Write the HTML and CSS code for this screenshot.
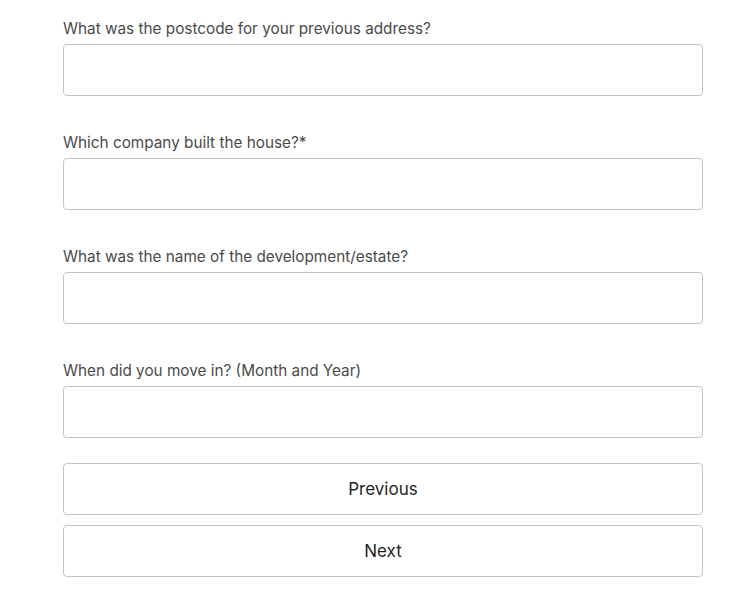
FILE: index.html
```html
<!DOCTYPE html>
<html lang="en">
<head>
<meta charset="utf-8">
<link rel="stylesheet" href="styles.css">
</head>
<body>
<form class="form">
  <div class="field">
    <label class="label">What was the postcode for your previous address?</label>
    <input class="input" type="text">
  </div>
  <div class="field">
    <label class="label">Which company built the house?*</label>
    <input class="input" type="text">
  </div>
  <div class="field">
    <label class="label">What was the name of the development/estate?</label>
    <input class="input" type="text">
  </div>
  <div class="field field-last">
    <label class="label">When did you move in? (Month and Year)</label>
    <input class="input" type="text">
  </div>
  <div class="buttons">
    <button class="btn" type="button">Previous</button>
    <button class="btn" type="button">Next</button>
  </div>
</form>
</body>
</html>
```
FILE: styles.css
```css
html, body {
  margin: 0;
  padding: 0;
  background: #ffffff;
}
body {
  font-family: Inter, "Liberation Sans", sans-serif;
}
.form {
  width: 640px;
  margin: 0 0 0 63px;
  padding-top: 19px;
  display: flex;
  flex-direction: column;
}
.field {
  display: flex;
  flex-direction: column;
  gap: 5px;
  margin-bottom: 37px;
}
.field-last {
  margin-bottom: 25px;
}
.label {
  font-size: 15.3px;
  line-height: 20px;
  color: #4a4a4a;
}
.input {
  box-sizing: border-box;
  height: 52px;
  width: 100%;
  border: 1px solid #c4c4c4;
  border-radius: 4px;
  background: #fff;
  margin: 0;
  padding: 0 12px;
  font: inherit;
}
.buttons {
  display: flex;
  flex-direction: column;
  gap: 10px;
}
.btn {
  box-sizing: border-box;
  height: 52px;
  width: 100%;
  border: 1px solid #c4c4c4;
  border-radius: 4px;
  background: #fff;
  font-family: inherit;
  font-size: 17px;
  color: #1f1f1f;
  margin: 0;
  padding: 0;
}
```
